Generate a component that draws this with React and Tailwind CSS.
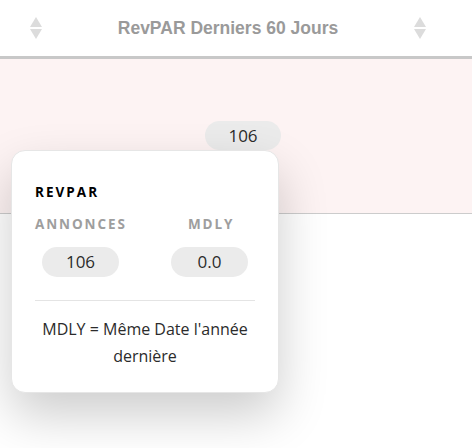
import React from "react";

function SortIcon() {
  return (
    <svg width="12" height="22" viewBox="0 0 12 22" className="text-[#dcdcdc]">
      <path d="M6 0 L12 10 L0 10 Z" fill="currentColor" />
      <path d="M0 12 L12 12 L6 22 Z" fill="currentColor" />
    </svg>
  );
}

function Pill({ children, className = "" }) {
  return (
    <div
      className={`flex items-center justify-center rounded-full bg-[#ebebeb] text-[17px] text-[#2b2b2b] font-medium ${className}`}
    >
      {children}
    </div>
  );
}

export default function App() {
  return (
    <div className="w-[472px] h-[448px] bg-white overflow-hidden relative font-['Open_Sans',sans-serif]">
      {/* Header */}
      <div className="h-[59px] flex items-center justify-between pl-[30px] pr-[46px] border-b-[3px] border-[#c8c8c8]">
        <SortIcon />
        <div className="font-['Liberation_Sans',sans-serif] font-bold text-[17.5px] text-[#9a9a9a]">
          RevPAR Derniers 60 Jours
        </div>
        <SortIcon />
      </div>

      {/* Chart area */}
      <div className="h-[155px] bg-[#fdf3f3] border-b border-[#cccccc] relative">
        <Pill className="absolute left-[205px] top-[62px] w-[76px] h-[29px]">106</Pill>
      </div>

      {/* Tooltip */}
      <div className="absolute left-[11px] top-[150px] w-[268px] h-[243px] bg-white rounded-[14px] border border-[#e6e6e6] shadow-[0_22px_50px_rgba(0,0,0,0.2)] px-[23px] pt-[31px]">
        <div className="text-[13.5px] font-bold tracking-[0.15em] text-black">REVPAR</div>
        <div className="grid grid-cols-2 mt-[12px]">
          <div className="flex flex-col items-start">
            <div className="text-[13.5px] font-bold tracking-[0.14em] text-[#9e9e9e]">ANNONCES</div>
            <Pill className="mt-[12px] ml-[7px] w-[77px] h-[30px]">106</Pill>
          </div>
          <div className="flex flex-col items-start pl-[20px]">
            <div className="text-[13.5px] font-bold tracking-[0.14em] text-[#9e9e9e] ml-[23px]">MDLY</div>
            <Pill className="mt-[12px] ml-[6px] w-[77px] h-[30px]">0.0</Pill>
          </div>
        </div>
        <div className="h-px bg-[#e4e4e4] mt-[23px]"></div>
        <div className="text-center text-[16px] leading-[27px] text-[#2b2b2b] mt-[15px] px-[6px]">
          MDLY = Même Date l'année dernière
        </div>
      </div>
    </div>
  );
}
